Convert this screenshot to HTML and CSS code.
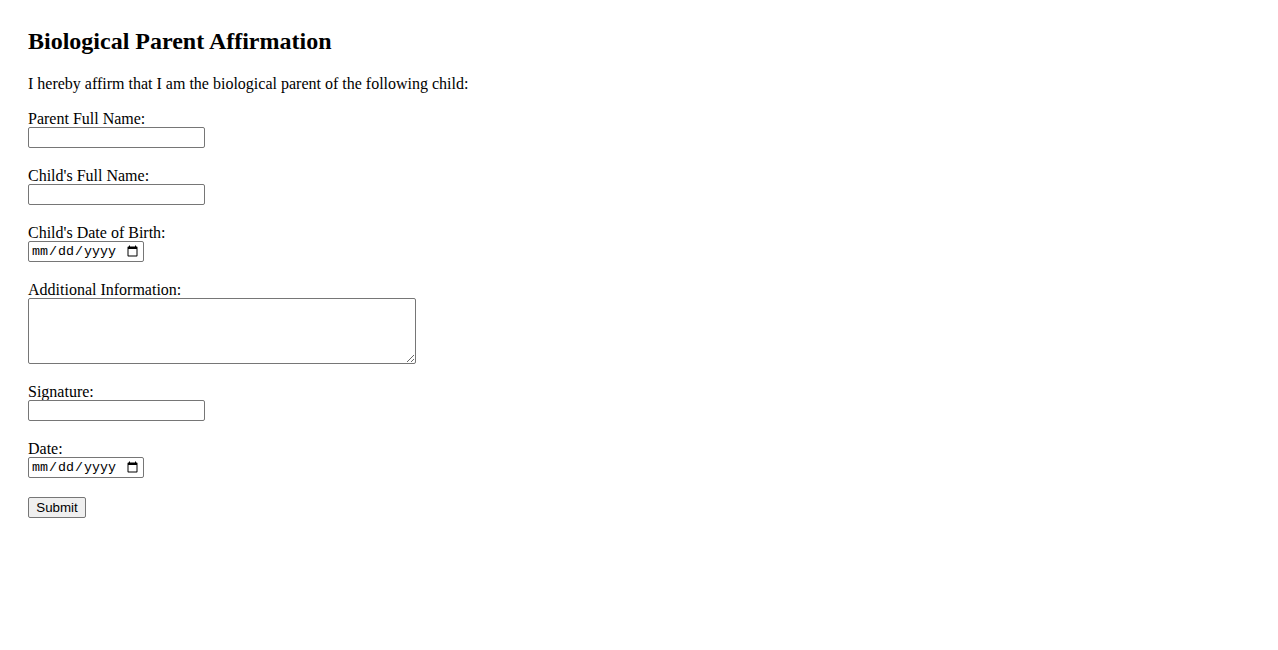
FILE: index.html
```html
<!doctype html>
<html lang="en">
  <head>
    <meta charset="UTF-8" />
    <meta name="viewport" content="width=device-width, initial-scale=1.0" />
    <title>Biological Parent Affirmation</title>
    <link rel="stylesheet" href="styles.css">
  </head>
  <body>
    <h2>Biological Parent Affirmation</h2>
    <p>I hereby affirm that I am the biological parent of the following child:</p>

    <form class="affirm-form">
      <div class="field">
        <label for="parent-name">Parent Full Name:</label>
        <input type="text" id="parent-name" name="parent_name" class="text-input" />
      </div>

      <div class="field">
        <label for="child-name">Child's Full Name:</label>
        <input type="text" id="child-name" name="child_name" class="text-input" />
      </div>

      <div class="field">
        <label for="child-dob">Child's Date of Birth:</label>
        <input type="date" id="child-dob" name="child_dob" class="date-input" />
      </div>

      <div class="field">
        <label for="info">Additional Information:</label>
        <textarea id="info" name="info" class="info-area"></textarea>
      </div>

      <div class="field">
        <label for="signature">Signature:</label>
        <input type="text" id="signature" name="signature" class="text-input" />
      </div>

      <div class="field">
        <label for="sign-date">Date:</label>
        <input type="date" id="sign-date" name="sign_date" class="date-input" />
      </div>

      <button type="submit" class="submit-btn">Submit</button>
    </form>
  </body>
</html>
```

FILE: styles.css
```css
body {
  font-family: "Liberation Serif", "Times New Roman", serif;
  font-size: 16px;
  margin: 0;
  padding: 28px;
  color: #000;
  background: #fff;
}

h2 {
  font-size: 24px;
  margin: 0 0 20px;
}

p {
  margin: 0 0 16px;
  line-height: 18px;
}

.field {
  display: flex;
  flex-direction: column;
  align-items: flex-start;
  margin-bottom: 18px;
}

.field label {
  line-height: 18px;
  padding-top: 1px;
  margin-bottom: -1px;
}

.text-input,
.date-input,
.info-area {
  box-sizing: border-box;
  margin: 0;
  border: 1px solid #767676;
  border-radius: 2px;
  background: #fff;
}

.text-input {
  width: 177px;
  height: 21px;
  padding: 1px 2px;
  font-family: "Liberation Sans", Arial, sans-serif;
  font-size: 13.33px;
}

.date-input {
  width: 116px;
  height: 21px;
  padding: 1px 2px;
  font-family: "Liberation Mono", "DejaVu Sans Mono", monospace;
  font-size: 13.33px;
}

.info-area {
  width: 388px;
  height: 66px;
  padding: 2px;
  font-family: "Liberation Mono", monospace;
  font-size: 13.33px;
}

.submit-btn {
  box-sizing: border-box;
  width: 58px;
  height: 21px;
  margin: 1px 0 0;
  padding: 1px 6px;
  font-family: "Liberation Sans", Arial, sans-serif;
  font-size: 13.33px;
  color: #000;
  background: #efefef;
  border: 1px solid #767676;
  border-radius: 2px;
}
```
